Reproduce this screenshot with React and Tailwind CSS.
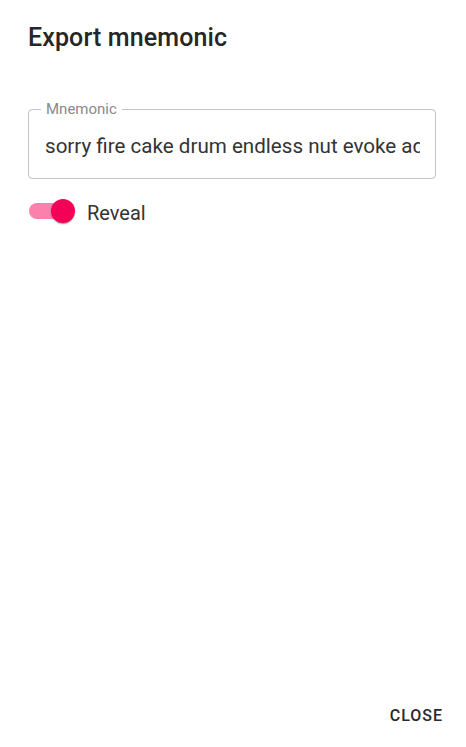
export default function App() {
  return (
    <div
      className="flex h-[747px] w-full flex-col bg-white text-[rgba(0,0,0,0.87)]"
      style={{ fontFamily: "Roboto, 'Liberation Sans', sans-serif" }}
    >
      <h2 className="ml-[28px] mt-[22px] text-[25px] font-medium leading-[32px] tracking-[0.005em] text-[#262626]">
        Export mnemonic
      </h2>

      <div className="relative ml-[28px] mr-[30px] mt-[55px] h-[70px] rounded-[4px] border border-[#c4c4c4]">
        <span className="absolute left-[12px] top-[-10px] bg-white px-[5px] text-[15px] leading-[18px] text-[#8a8a8a]">
          Mnemonic
        </span>
        <div className="pl-[16px] pr-[15px] pt-[23px]">
          <div className="overflow-hidden whitespace-nowrap text-[20.6px] leading-[26px] text-[#333]">
            sorry fire cake drum endless nut evoke adapt oxygen ranch
          </div>
        </div>
      </div>

      <div className="ml-[29px] mt-[20px] flex items-start">
        <div className="relative h-[24px] w-[46px]">
          <div className="absolute left-0 top-[4px] h-[16px] w-[40px] rounded-full bg-[#fb80ab]" />
          <div className="absolute left-[22px] top-0 h-[24px] w-[24px] rounded-full bg-[#f50057] shadow-[0_2px_1px_-1px_rgba(0,0,0,0.2),0_1px_1px_0_rgba(0,0,0,0.14),0_1px_3px_0_rgba(0,0,0,0.12)]" />
        </div>
        <span className="ml-[12px] mt-[2px] text-[20px] leading-[24px] text-[#333]">Reveal</span>
      </div>

      <div className="flex-1" />

      <div className="flex justify-end pb-[21px] pr-[23px]">
        <span className="text-[16px] font-medium uppercase leading-[20px] tracking-[0.06em] text-[#2a2a2a]">
          Close
        </span>
      </div>
    </div>
  );
}
